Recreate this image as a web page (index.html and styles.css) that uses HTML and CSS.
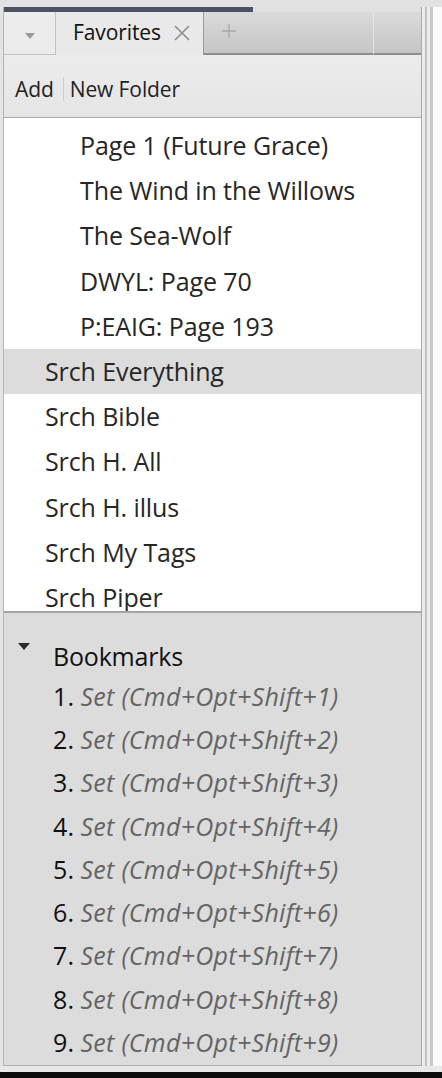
FILE: index.html
```html
<!DOCTYPE html>
<html>
<head>
<meta charset="utf-8">
<link rel="stylesheet" href="styles.css">
</head>
<body>
<div class="window">
  <div class="top-strip"></div>
  <div class="main">
    <div class="panel">
      <div class="tabbar">
        <div class="accent"></div>
        <div class="tabs">
          <div class="tab tab-menu"><span class="menu-tri"></span></div>
          <div class="tab tab-active"><span class="tab-label">Favorites</span>
            <svg class="tab-close" width="18" height="18" viewBox="0 0 18 18"><path d="M2 2 L16 16 M16 2 L2 16" stroke="#8a8a8a" stroke-width="1.5" fill="none"/></svg>
          </div>
          <div class="tab tab-new">
            <svg class="tab-plus" width="14" height="14" viewBox="0 0 14 14"><path d="M7 0 V14 M0 7 H14" stroke="#a8a8a8" stroke-width="1.3" fill="none"/></svg>
          </div>
          <div class="tab tab-rest"></div>
        </div>
      </div>
      <div class="toolbar">
        <span class="tool">Add</span>
        <span class="tool-sep"></span>
        <span class="tool">New Folder</span>
      </div>
      <div class="list">
        <div class="row child">Page 1 (Future Grace)</div>
        <div class="row child">The Wind in the Willows</div>
        <div class="row child">The Sea-Wolf</div>
        <div class="row child">DWYL: Page 70</div>
        <div class="row child">P:EAIG: Page 193</div>
        <div class="row selected">Srch Everything</div>
        <div class="row">Srch Bible</div>
        <div class="row">Srch H. All</div>
        <div class="row">Srch H. illus</div>
        <div class="row">Srch My Tags</div>
        <div class="row">Srch Piper</div>
      </div>
      <div class="bookmarks">
        <div class="bm-head"><span class="bm-tri"></span><span class="bm-title">Bookmarks</span></div>
        <div class="bm-row"><span class="bm-num">1.</span><span class="bm-set">Set (Cmd+Opt+Shift+1)</span></div>
        <div class="bm-row"><span class="bm-num">2.</span><span class="bm-set">Set (Cmd+Opt+Shift+2)</span></div>
        <div class="bm-row"><span class="bm-num">3.</span><span class="bm-set">Set (Cmd+Opt+Shift+3)</span></div>
        <div class="bm-row"><span class="bm-num">4.</span><span class="bm-set">Set (Cmd+Opt+Shift+4)</span></div>
        <div class="bm-row"><span class="bm-num">5.</span><span class="bm-set">Set (Cmd+Opt+Shift+5)</span></div>
        <div class="bm-row"><span class="bm-num">6.</span><span class="bm-set">Set (Cmd+Opt+Shift+6)</span></div>
        <div class="bm-row"><span class="bm-num">7.</span><span class="bm-set">Set (Cmd+Opt+Shift+7)</span></div>
        <div class="bm-row"><span class="bm-num">8.</span><span class="bm-set">Set (Cmd+Opt+Shift+8)</span></div>
        <div class="bm-row"><span class="bm-num">9.</span><span class="bm-set">Set (Cmd+Opt+Shift+9)</span></div>
      </div>
    </div>
    <div class="side-strip">
      <span class="line l1"></span>
      <span class="line l2"></span>
    </div>
  </div>
  <div class="bottom-gap"></div>
  <div class="bottom-black"></div>
</div>
</body>
</html>
```
FILE: styles.css
```css
* { box-sizing: border-box; }
html, body { margin: 0; padding: 0; }
body {
  width: 442px;
  height: 1078px;
  overflow: hidden;
  background: #e4e4e4;
  font-family: "Open Sans", "Noto Sans", sans-serif;
  color: #222;
}
.window {
  display: flex;
  flex-direction: column;
  height: 1078px;
}
.top-strip {
  height: 7px;
  background: #e2e2e2;
  flex: none;
}
.main {
  display: flex;
  flex: 1;
  min-height: 0;
  padding-left: 3px;
}
.panel {
  width: 419px;
  display: flex;
  flex-direction: column;
  border-left: 1px solid #b4b4b4;
  border-right: 1px solid #a8a8a8;
  border-bottom: 1px solid #b0b0b0;
  background: #dcdcdc;
}
.side-strip {
  width: 20px;
  display: flex;
  padding-left: 3px;
  gap: 3px;
  background: linear-gradient(to right, #ececec 0, #ececec 11px, #fafafa 11px);
}
.side-strip .line {
  width: 2px;
  background: #c2c2c2;
}
.side-strip .l2 { width: 3px; background: #c8c8c8; }

/* tab bar */
.tabbar {
  height: 48px;
  flex: none;
  display: flex;
  flex-direction: column;
  background: #e0e0e0;
}
.accent {
  height: 5px;
  width: 249px;
  background: #4b5363;
  flex: none;
}
.tabs {
  flex: 1;
  display: flex;
}
.tab { height: 100%; }
.tab-menu {
  width: 52px;
  background: #ececec;
  border-right: 1px solid #c4c4c4;
  border-bottom: 1px solid #c4c4c4;
  display: flex;
  align-items: center;
  justify-content: center;
}
.menu-tri {
  width: 0; height: 0;
  border-left: 5px solid transparent;
  border-right: 5px solid transparent;
  border-top: 6px solid #9a9a9a;
  margin-top: 6px;
}
.tab-active {
  width: 147px;
  background: #e9e9e9;
  display: flex;
  align-items: center;
  padding-left: 17px;
  padding-bottom: 3px;
}
.tab-label {
  font-size: 21px;
  color: #111;
  letter-spacing: -0.1px;
}
.tab-close { margin-left: 12px; margin-top: 1px; }
.tab-new {
  width: 170px;
  background: linear-gradient(#dadada, #c5c5c5);
  border-left: 1px solid #9c9c9c;
  border-bottom: 2px solid #8e8e8e;
  display: flex;
  align-items: center;
  padding-left: 18px;
  padding-bottom: 3px;
}
.tab-rest {
  flex: 1;
  background: linear-gradient(#dadada, #c5c5c5);
  border-left: 1px solid #e4e4e4;
  border-bottom: 2px solid #8e8e8e;
}

/* toolbar */
.toolbar {
  height: 63px;
  flex: none;
  display: flex;
  align-items: center;
  background: linear-gradient(#ececec, #e5e5e5);
  border-bottom: 1px solid #a9a9a9;
  padding-left: 11px;
  padding-top: 5px;
}
.tool {
  font-size: 21px;
  color: #222;
  letter-spacing: -0.1px;
}
.tool-sep {
  width: 1px;
  height: 24px;
  background: #cdcdcd;
  margin: 0 6px 0 9px;
}

/* list */
.list {
  height: 495px;
  flex: none;
  overflow: hidden;
  background: #fff;
  border-bottom: 2px solid #a5a5a5;
  padding-top: 5px;
}
.row {
  height: 45.2px;
  display: flex;
  align-items: center;
  padding-left: 41px;
  padding-bottom: 1px;
  font-size: 25px;
  color: #262626;
  letter-spacing: -0.1px;
  white-space: nowrap;
}
.row.child { padding-left: 76px; }
.row.selected { background: #dcdcdc; }

/* bookmarks */
.bookmarks {
  flex: 1;
  background: #dcdcdc;
  padding-top: 23px;
}
.bm-head {
  height: 38px;
  display: flex;
  align-items: flex-start;
  position: relative;
  padding-left: 49px;
  padding-top: 2px;
}
.bm-tri {
  position: absolute;
  left: 14px;
  top: 7px;
  width: 0; height: 0;
  border-left: 6px solid transparent;
  border-right: 6px solid transparent;
  border-top: 7px solid #2a2a2a;
}
.bm-title {
  font-size: 25px;
  line-height: 36px;
  color: #111;
  letter-spacing: -0.2px;
}
.bm-row {
  height: 43.3px;
  display: flex;
  align-items: center;
  padding-left: 49px;
  white-space: nowrap;
  font-size: 25px;
  letter-spacing: 0.3px;
}
.bm-num { color: #111; margin-right: 6px; }
.bm-set { color: #646464; font-style: italic; }

.bottom-gap { height: 6px; flex: none; background: #e8e8e8; }
.bottom-black { height: 6px; flex: none; background: #0c0c0c; }
```
